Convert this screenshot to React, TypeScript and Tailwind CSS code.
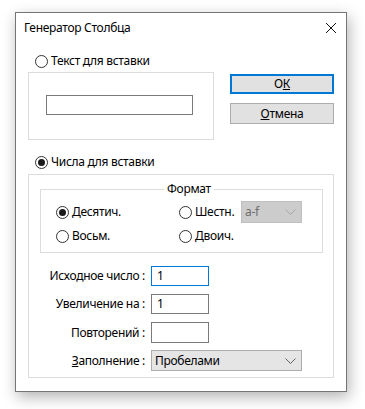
import React from 'react';

const Radio: React.FC<{ checked?: boolean; label: string }> = ({ checked, label }) => (
  <div className="flex items-center h-[14px] whitespace-nowrap">
    <span className="w-[13px] h-[13px] shrink-0 rounded-full border border-[#333] flex items-center justify-center bg-white">
      {checked && <span className="w-[7px] h-[7px] rounded-full bg-[#1a1a1a]" />}
    </span>
    <span className="ml-[3px] leading-[14px]">{label}</span>
  </div>
);

const Chevron: React.FC<{ color: string }> = ({ color }) => (
  <svg width="11" height="6" viewBox="0 0 11 6" fill="none">
    <path d="M0.5 0.5L5.5 5.5L10.5 0.5" stroke={color} strokeWidth="1" />
  </svg>
);

const App: React.FC = () => {
  return (
    <div
      className="w-[365px] h-[409px] bg-white pl-[15px] pt-[12px] text-[12px] tracking-[-0.3px] text-black"
      style={{ fontFamily: '"Noto Sans", "Open Sans", sans-serif' }}
    >
      <div className="w-[332px] h-[380px] border border-[#757575] bg-white shadow-[2px_5px_14px_rgba(0,0,0,0.3)] flex flex-col">
        {/* Title bar */}
        <div className="h-[30px] flex items-center justify-between pl-[8px] pr-[10px]">
          <span className="leading-[16px]">Генератор Столбца</span>
          <svg width="10" height="10" viewBox="0 0 10 10">
            <path d="M0 0L10 10M10 0L0 10" stroke="#111" strokeWidth="1" />
          </svg>
        </div>

        <div className="px-[12px]">
          {/* Text insert section */}
          <div className="flex">
            <div className="w-[186px]">
              <div className="mt-[11px] pl-[7px]">
                <Radio label="Текст для вставки" />
              </div>
              <div className="mt-[4px] h-[68px] border border-[#dcdcdc] pl-[17px] pt-[22px]">
                <div className="w-[147px] h-[20px] border border-[#7a7a7a] bg-white" />
              </div>
            </div>
            <div className="ml-[16px] mt-[31px] flex flex-col">
              <button className="w-[104px] h-[20px] border-2 border-[#0078d7] bg-[#e1e1e1] leading-[14px]">
                О<span className="underline">К</span>
              </button>
              <button className="mt-[9px] w-[104px] h-[21px] border border-[#adadad] bg-[#e1e1e1] leading-[14px]">
                <span className="underline">О</span>тмена
              </button>
            </div>
          </div>

          {/* Numbers section */}
          <div className="mt-[15px] pl-[7px]">
            <Radio checked label="Числа для вставки" />
          </div>
          <div className="mt-[5px] h-[204px] border border-[#dcdcdc] pl-[11px] pr-[10px] pt-[7px]">
            <fieldset className="border border-[#dcdcdc] pl-[15px] pb-[9px] pt-0">
              <legend className="mx-auto px-[3px] leading-[14px]">Формат</legend>
              <div className="flex items-center mt-[5px] h-[22px]">
                <div className="w-[123px]">
                  <Radio checked label="Десятич." />
                </div>
                <div className="w-[62px]">
                  <Radio label="Шестн." />
                </div>
                <div className="w-[61px] h-[22px] bg-[#cccccc] border border-[#bfbfbf] flex items-center justify-between pl-[3px] pr-[5px] text-[#6d6d6d]">
                  <span className="leading-[14px]">a-f</span>
                  <Chevron color="#a8a8a8" />
                </div>
              </div>
              <div className="flex items-center mt-[6px]">
                <div className="w-[123px]">
                  <Radio label="Восьм." />
                </div>
                <Radio label="Двоич." />
              </div>
            </fieldset>

            <div className="mt-[13px] -ml-[11px] flex flex-col gap-[8px]">
              <div className="flex items-center">
                <span className="w-[116px] text-right leading-[14px]">Исходное число :</span>
                <div className="ml-[6px] w-[58px] h-[20px] border border-[#0078d7] pl-[5px] leading-[18px]">1</div>
              </div>
              <div className="flex items-center">
                <span className="w-[116px] text-right leading-[14px]">Увеличение на :</span>
                <div className="ml-[6px] w-[58px] h-[20px] border border-[#7a7a7a] pl-[5px] leading-[18px]">1</div>
              </div>
              <div className="flex items-center">
                <span className="w-[116px] text-right leading-[14px]">Повторений :</span>
                <div className="ml-[6px] w-[58px] h-[21px] border border-[#7a7a7a]" />
              </div>
              <div className="flex items-center -mt-[1px]">
                <span className="w-[116px] text-right leading-[14px]">
                  <span className="underline">З</span>аполнение :
                </span>
                <div className="ml-[6px] w-[151px] h-[21px] bg-[#e5e5e5] border border-[#adadad] flex items-center justify-between pl-[3px] pr-[5px]">
                  <span className="leading-[14px]">Пробелами</span>
                  <Chevron color="#606060" />
                </div>
              </div>
            </div>
          </div>
        </div>
      </div>
    </div>
  );
};

export default App;
